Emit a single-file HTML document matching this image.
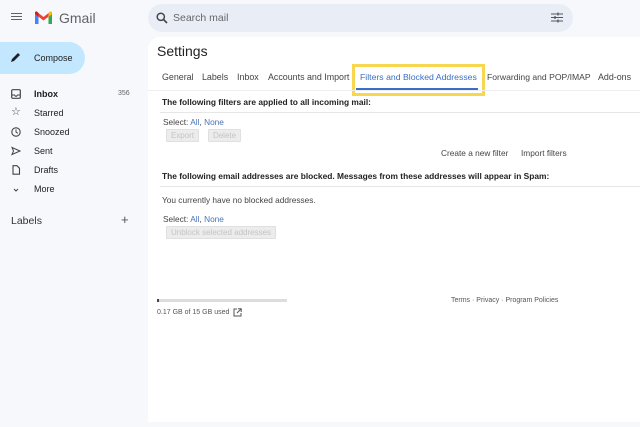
<!DOCTYPE html>
<html><head><meta charset="utf-8"><style>
*{margin:0;padding:0;box-sizing:border-box}
body{width:640px;height:427px;overflow:hidden;background:#f6f8fc;font-family:"Liberation Sans",sans-serif;position:relative;color:#202124}
.a{position:absolute;white-space:nowrap}
.nav{font-size:9px;color:#202124}
.ic{position:absolute;left:11px;width:10px;height:10px}
.lnk{color:#4a73b9}
.btn{position:absolute;background:#ececec;border:1px solid #e0e0e0;color:#c4c4c4;font-size:8px;height:13px;line-height:11px;text-align:center;border-radius:1px}
.t{font-size:8.3px;color:#444}
.tab{font-size:8.9px;color:#444;top:72px}
.b{font-size:8.4px;font-weight:bold;color:#222}
</style></head><body>
<div class="a" style="left:11px;top:13px;width:11px;height:1.3px;background:#5f6368;box-shadow:0 3px 0 #5f6368,0 6px 0 #5f6368"></div>
<svg class="a" style="left:34px;top:11px" width="19" height="14" viewBox="0 0 19 14">
<path d="M1 3v10h3.5V6L1 3z" fill="#4285f4"/><path d="M14.5 6v7H18V3z" fill="#34a853"/><path d="M1 3l8.5 6.5L18 3V1.5L16.5 0.5 9.5 6 2.5 0.5 1 1.5z" fill="#ea4335"/><path d="M14.5 2v4L18 3V1.5C18 0.5 16.8 0 16 .6z" fill="#fbbc04"/><path d="M1 1.5V3l3.5 3V2L3 .6C2.2 0 1 .5 1 1.5z" fill="#c5221f"/></svg>
<div class="a" style="left:59px;top:10px;font-size:14px;color:#5f6368">Gmail</div>
<div class="a" style="left:148px;top:4px;width:425px;height:28px;background:#e9eef6;border-radius:14px"></div>
<svg class="a" style="left:156px;top:12px" width="12" height="12" viewBox="0 0 12 12"><circle cx="4.8" cy="4.8" r="3.6" fill="none" stroke="#444" stroke-width="1.5"/><path d="M7.5 7.5L11 11" stroke="#444" stroke-width="1.6"/></svg>
<div class="a" style="left:173px;top:12px;font-size:10.5px;color:#666">Search mail</div>
<svg class="a" style="left:551px;top:12px" width="12" height="11" viewBox="0 0 12 11"><path d="M0 2h12M0 5.5h12M0 9h12" stroke="#555" stroke-width="1.1"/><path d="M7 0.5v3M4 4v3M7 7.5v3" stroke="#555" stroke-width="1.3"/></svg>
<div class="a" style="left:0;top:42px;width:85px;height:32px;background:#c2e7ff;border-radius:0 16px 16px 0"></div>
<svg class="a" style="left:10px;top:52px" width="11" height="11" viewBox="0 0 11 11"><path d="M1 10l1-3 6-6 2 2-6 6z" fill="#202124"/></svg>
<div class="a nav" style="left:34px;top:53px">Compose</div>
<svg class="ic" style="top:89px" viewBox="0 0 10 10"><rect x=".7" y=".7" width="8.6" height="8.6" rx="1" fill="none" stroke="#444" stroke-width="1.2"/><path d="M1 6h2.5l1 1.2h1L6.5 6H9" fill="none" stroke="#444" stroke-width="1"/></svg>
<div class="a nav" style="left:34px;top:89px;font-weight:bold">Inbox</div>
<div class="a" style="left:118px;top:90px;font-size:7px;color:#666">356</div>
<div class="a" style="left:11px;top:105px;font-size:11px;color:#444">☆</div>
<div class="a nav" style="left:34px;top:108px">Starred</div>
<svg class="ic" style="top:127px" viewBox="0 0 10 10"><circle cx="5" cy="5" r="4.2" fill="none" stroke="#444" stroke-width="1.1"/><path d="M5 2.5V5l1.8 1.3" fill="none" stroke="#444"/></svg>
<div class="a nav" style="left:34px;top:127px">Snoozed</div>
<svg class="ic" style="top:146px" viewBox="0 0 10 10"><path d="M1 1.5l8 3.5-8 3.5 1.5-3.5z" fill="none" stroke="#444" stroke-width="1"/></svg>
<div class="a nav" style="left:34px;top:146px">Sent</div>
<svg class="ic" style="top:165px" viewBox="0 0 10 10"><path d="M2 .7h4l2.5 2.5v6H2z" fill="none" stroke="#444" stroke-width="1.1"/></svg>
<div class="a nav" style="left:34px;top:165px">Drafts</div>
<svg class="ic" style="top:185px" viewBox="0 0 10 10"><path d="M3 4l2 2 2-2" fill="none" stroke="#444" stroke-width="1"/></svg>
<div class="a nav" style="left:34px;top:184px">More</div>
<div class="a" style="left:11px;top:215px;font-size:10.5px;color:#333">Labels</div>
<div class="a" style="left:121px;top:212px;font-size:13px;color:#555">+</div>
<div class="a" style="left:148px;top:37px;width:500px;height:385px;background:#fff;border-radius:12px 0 0 0"></div>
<div class="a" style="left:157px;top:43px;font-size:14px;color:#222">Settings</div>
<div class="a tab" style="left:162px">General</div>
<div class="a tab" style="left:202px">Labels</div>
<div class="a tab" style="left:237px">Inbox</div>
<div class="a tab" style="left:268px">Accounts and Import</div>
<div class="a tab" style="left:360px;color:#3a6fc4;font-size:8.7px">Filters and Blocked Addresses</div>
<div class="a" style="left:356px;top:88px;width:122px;height:1.5px;background:#3a6fc4"></div>
<div class="a tab" style="left:487px;font-size:8.6px">Forwarding and POP/IMAP</div>
<div class="a tab" style="left:598px">Add-ons</div>
<div class="a" style="left:352px;top:64px;width:133px;height:32px;border:3px solid #f7d74f"></div>
<div class="a" style="left:148px;top:90px;width:492px;height:1px;background:#eee"></div>
<div class="a b" style="left:162px;top:97px">The following filters are applied to all incoming mail:</div>
<div class="a" style="left:160px;top:112px;width:480px;height:1px;background:#e6e6e6"></div>
<div class="a t" style="left:163px;top:117px">Select: <span class="lnk">All</span>, <span class="lnk">None</span></div>
<div class="btn" style="left:166px;top:129px;width:33px">Export</div>
<div class="btn" style="left:208px;top:129px;width:33px">Delete</div>
<div class="a t lnk" style="left:441px;top:148px">Create a new filter</div>
<div class="a t lnk" style="left:521px;top:148px">Import filters</div>
<div class="a b" style="left:162px;top:171px">The following email addresses are blocked. Messages from these addresses will appear in Spam:</div>
<div class="a" style="left:160px;top:186px;width:480px;height:1px;background:#e6e6e6"></div>
<div class="a t" style="left:162px;top:195px">You currently have no blocked addresses.</div>
<div class="a t" style="left:163px;top:214px">Select: <span class="lnk">All</span>, <span class="lnk">None</span></div>
<div class="btn" style="left:166px;top:226px;width:110px">Unblock selected addresses</div>
<div class="a" style="left:157px;top:299px;width:130px;height:3px;background:#ddd"></div>
<div class="a" style="left:157px;top:299px;width:2px;height:3px;background:#444"></div>
<div class="a" style="left:157px;top:309px;font-size:7px;color:#555">0.17 GB of 15 GB used</div>
<svg class="a" style="left:233px;top:308px" width="9" height="9" viewBox="0 0 9 9"><path d="M4 1H1v7h7V5M5 .8h3.2V4M8 1L4 5" fill="none" stroke="#555" stroke-width="1"/></svg>
<div class="a" style="left:451px;top:297px;font-size:7px;color:#555">Terms · Privacy · Program Policies</div>
</body></html>
